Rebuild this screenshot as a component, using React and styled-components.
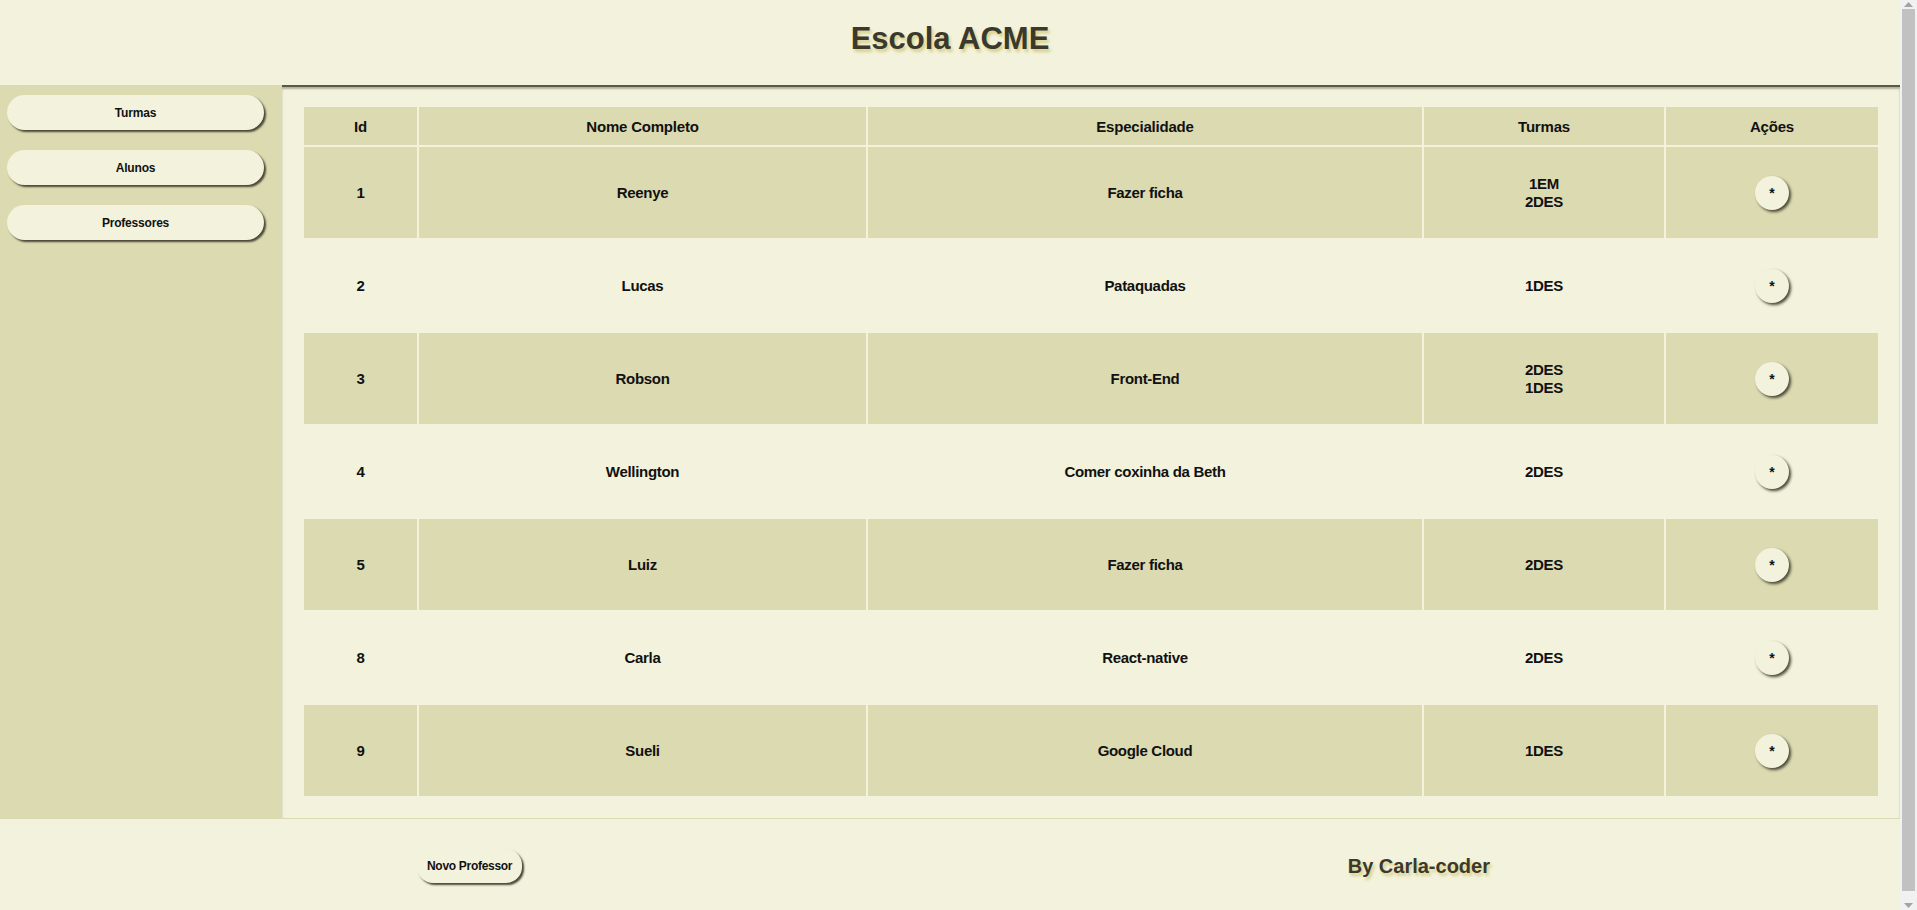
import React from 'react'
import styled, { createGlobalStyle } from 'styled-components'

const LIGHT = '#f3f2dc'
const OLIVE = '#dbdab0'
const SANS = `"Liberation Sans", Arial, sans-serif`

const GlobalStyle = createGlobalStyle`
  body {
    margin: 0;
    background: ${LIGHT};
    font-family: ${SANS};
    color: #111;
    overflow: hidden;
  }
`

const Page = styled.div`
  display: flex;
  flex-direction: column;
  width: calc(100% - 17px);
  min-height: 100vh;
`

const Header = styled.header`
  height: 85px;
  box-sizing: border-box;
  padding-bottom: 8px;
  display: flex;
  align-items: center;
  justify-content: center;
  background: ${LIGHT};
`

const Title = styled.h1`
  margin: 0;
  font-family: ${SANS};
  font-size: 31px;
  font-weight: 700;
  color: #3a392c;
  text-shadow: 2px 3px 3px #d8d08c;
`

const Body = styled.div`
  display: flex;
  align-items: stretch;
`

const Sidebar = styled.aside`
  width: 282px;
  flex-shrink: 0;
  background: ${OLIVE};
  display: flex;
  flex-direction: column;
  gap: 20px;
  padding: 10px 0 0 7px;
  box-sizing: border-box;
`

const SideButton = styled.button`
  width: 257px;
  height: 35px;
  border: none;
  border-radius: 18px;
  background: ${LIGHT};
  box-shadow: 2px 2px 2px #4a4836;
  font-family: ${SANS};
  font-size: 12px;
  font-weight: 700;
  letter-spacing: -0.2px;
  color: #111;
  cursor: pointer;
`

const Main = styled.main`
  flex: 1;
  border-top: 2px solid #5a5946;
  box-shadow: inset 0 2px 2px rgba(60, 58, 40, 0.35);
  padding: 18px 20px 20px;
`

const Table = styled.table`
  width: 100%;
  table-layout: fixed;
  border-collapse: separate;
  border-spacing: 2px;
  text-align: center;
`

const Th = styled.th`
  height: 38px;
  padding: 0;
  background: ${OLIVE};
  font-family: ${SANS};
  font-size: 15px;
  font-weight: 700;
  letter-spacing: -0.2px;
  color: #111;
`

const Td = styled.td`
  height: 91px;
  padding: 0;
  background: ${p => (p.$shaded ? OLIVE : 'transparent')};
  font-family: ${SANS};
  font-size: 15px;
  font-weight: 700;
  letter-spacing: -0.3px;
  line-height: 18px;
  color: #111;
`

const ActionButton = styled.button`
  width: 34px;
  height: 34px;
  padding: 0;
  border: none;
  border-radius: 50%;
  background: ${LIGHT};
  box-shadow: 2px 2px 3px #4a4836;
  font-family: ${SANS};
  font-size: 14px;
  font-weight: 700;
  line-height: 34px;
  color: #111;
  cursor: pointer;
`

const Footer = styled.footer`
  height: 94px;
  border-top: 1px solid ${OLIVE};
  display: flex;
  align-items: center;
  padding: 0 410px 0 417px;
`

const NewButton = styled.button`
  height: 34px;
  padding: 0 10px;
  border: none;
  border-radius: 16px;
  background: ${LIGHT};
  box-shadow: 2px 2px 2px #4a4836;
  font-family: ${SANS};
  font-size: 12px;
  font-weight: 700;
  letter-spacing: -0.3px;
  color: #111;
  cursor: pointer;
`

const Credit = styled.h2`
  margin: 0 0 0 auto;
  font-family: ${SANS};
  font-size: 20px;
  font-weight: 700;
  color: #3a392c;
  text-shadow: 2px 3px 3px #d8d08c;
`

/* the browser's scrollbar, as it shows in the reference */
const ScrollTrack = styled.div`
  position: fixed;
  top: 0;
  right: 0;
  bottom: 0;
  width: 17px;
  background: #f1f1f1;
  display: flex;
  flex-direction: column;
  align-items: center;
`

const ScrollArrow = styled.div`
  height: 9px;
  flex-shrink: 0;
  display: flex;
  align-items: center;
  justify-content: center;
`

const ScrollThumb = styled.div`
  flex: 1;
  width: 13px;
  margin: 0 0 10px;
  background: #c1c1c1;
`

const Arrow = ({ down }) => (
  <svg width="9" height="5" viewBox="0 0 9 5">
    <path d={down ? 'M0 0 L9 0 L4.5 5 Z' : 'M0 5 L9 5 L4.5 0 Z'} fill="#a3a3a3" />
  </svg>
)

const professores = [
  { id: 1, nome: 'Reenye', esp: 'Fazer ficha', turmas: ['1EM', '2DES'] },
  { id: 2, nome: 'Lucas', esp: 'Pataquadas', turmas: ['1DES'] },
  { id: 3, nome: 'Robson', esp: 'Front-End', turmas: ['2DES', '1DES'] },
  { id: 4, nome: 'Wellington', esp: 'Comer coxinha da Beth', turmas: ['2DES'] },
  { id: 5, nome: 'Luiz', esp: 'Fazer ficha', turmas: ['2DES'] },
  { id: 8, nome: 'Carla', esp: 'React-native', turmas: ['2DES'] },
  { id: 9, nome: 'Sueli', esp: 'Google Cloud', turmas: ['1DES'] },
]

export default function App() {
  return (
    <Page>
      <GlobalStyle />
      <Header>
        <Title>Escola ACME</Title>
      </Header>
      <Body>
        <Sidebar>
          <SideButton>Turmas</SideButton>
          <SideButton>Alunos</SideButton>
          <SideButton>Professores</SideButton>
        </Sidebar>
        <Main>
          <Table>
            <colgroup>
              <col style={{ width: 113 }} />
              <col style={{ width: 447 }} />
              <col style={{ width: 554 }} />
              <col style={{ width: 240 }} />
              <col style={{ width: 212 }} />
            </colgroup>
            <thead>
              <tr>
                <Th>Id</Th>
                <Th>Nome Completo</Th>
                <Th>Especialidade</Th>
                <Th>Turmas</Th>
                <Th>Ações</Th>
              </tr>
            </thead>
            <tbody>
              {professores.map((p, i) => {
                const shaded = i % 2 === 0
                return (
                  <tr key={p.id}>
                    <Td $shaded={shaded}>{p.id}</Td>
                    <Td $shaded={shaded}>{p.nome}</Td>
                    <Td $shaded={shaded}>{p.esp}</Td>
                    <Td $shaded={shaded}>
                      {p.turmas.map(t => (
                        <div key={t}>{t}</div>
                      ))}
                    </Td>
                    <Td $shaded={shaded}>
                      <ActionButton>*</ActionButton>
                    </Td>
                  </tr>
                )
              })}
            </tbody>
          </Table>
        </Main>
      </Body>
      <Footer>
        <NewButton>Novo Professor</NewButton>
        <Credit>By Carla-coder</Credit>
      </Footer>
      <ScrollTrack>
        <ScrollArrow>
          <Arrow />
        </ScrollArrow>
        <ScrollThumb />
        <ScrollArrow>
          <Arrow down />
        </ScrollArrow>
      </ScrollTrack>
    </Page>
  )
}
